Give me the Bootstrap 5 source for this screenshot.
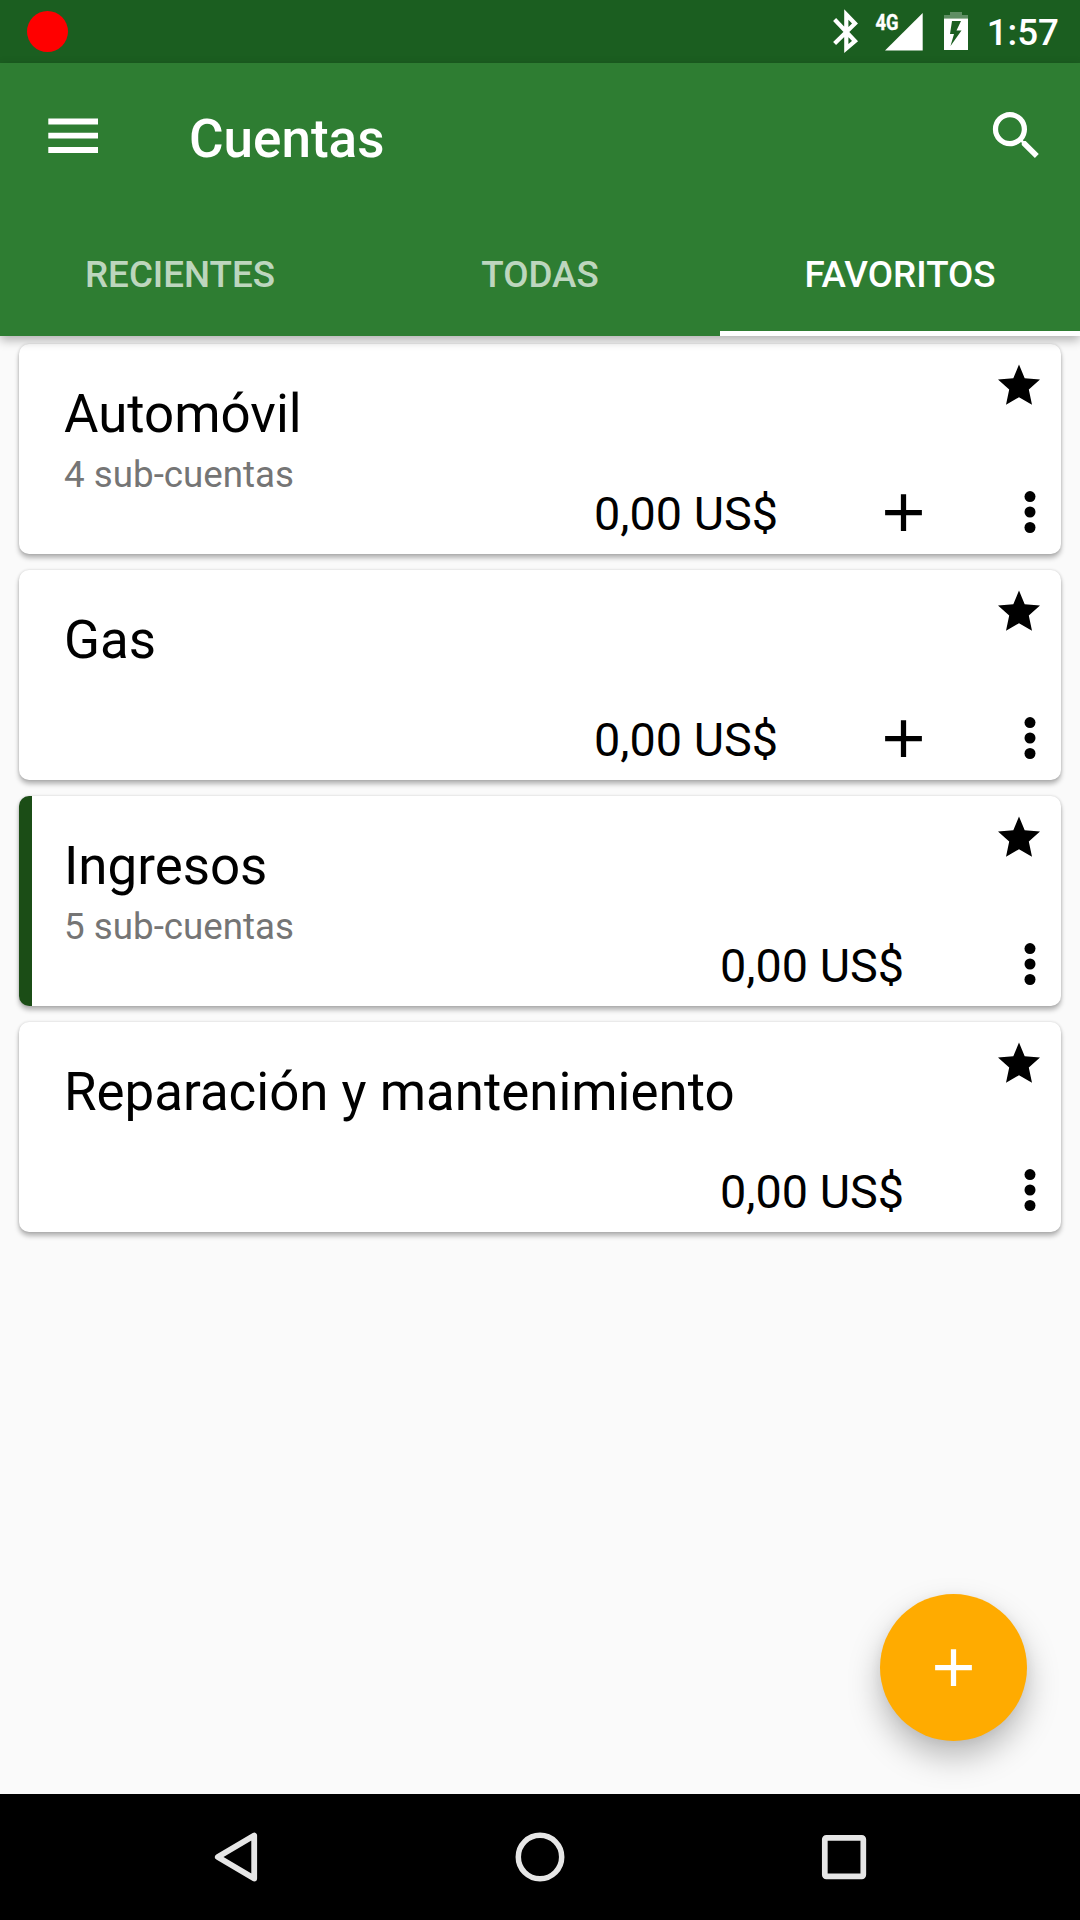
<!DOCTYPE html>
<html lang="es">
<head>
<meta charset="utf-8">
<meta name="viewport" content="width=device-width, initial-scale=1">
<title>Cuentas</title>
<link href="https://cdn.jsdelivr.net/npm/bootstrap@5.3.0/dist/css/bootstrap.min.css" rel="stylesheet">
<style>
  body { font-family: Roboto, "Noto Sans", sans-serif; background: #fafafa; color: #000; }
  svg { display: block; flex: none; }
  .screen { width: 1080px; height: 1920px; }
  .status-bar { height: 63px; background: #1b5e20; padding: 0 21px 0 27px; }
  .rec-dot { width: 41px; height: 41px; background: #f00; }
  .clock { font-size: 36.75px; line-height: 43px; font-weight: 500; padding-top: 2px; margin-left: 16px; }
  .signal-label { font-size: 22px; font-weight: 700; }
  .app-bar { background: #2e7d32; box-shadow: 0 4px 10px rgba(0,0,0,.3); z-index: 2; }
  .tool-row { height: 147px; padding: 0 32px 0 42px; }
  .tool-title { font-size: 53px; line-height: 62px; font-weight: 500; margin-left: 84px; padding-top: 4px; }
  .tab-row { height: 126px; }
  .tab-row .nav-link { height: 126px; font-size: 36.75px; line-height: 43px; font-weight: 500; color: rgba(255,255,255,.7); border-radius: 0; padding: 7px 0 0; border-bottom: 5px solid transparent; }
  .tab-row .nav-link.active { color: #fff; border-bottom-color: #fff; }
  .accounts { padding: 8px 19px; gap: 16px; }
  .account { height: 210px; border: 0; border-radius: 10px; box-shadow: 0 4px 5px rgba(0,0,0,.28), 0 0 3px rgba(0,0,0,.16); padding: 0 0 10px 45px; overflow: hidden; }
  .account.income { border-left: 13px solid #1b4d16; padding-left: 32px; }
  .account-name { font-size: 52.85px; line-height: 62px; padding-top: 39px; }
  .account-note { font-size: 36.75px; line-height: 43px; color: #757575; margin-top: 8px; }
  .star { margin: 20px 20px 0 0; }
  .amount { font-size: 46.75px; line-height: 56px; margin-right: 94px; padding-top: 2px; }
  .action-row { height: 63px; margin-top: -52px; }
  .act { width: 126px; height: 63px; }
  .fab { width: 147px; height: 147px; right: 53px; bottom: 53px; background: #ffab00; box-shadow: 0 16px 32px rgba(0,0,0,.26), 0 2px 12px rgba(0,0,0,.05); }
  .nav-keys { height: 126px; padding: 0 166px; }
</style>
<script src="https://cdn.jsdelivr.net/npm/bootstrap@5.3.0/dist/js/bootstrap.bundle.min.js"></script>
</head>
<body>
<svg class="d-none" aria-hidden="true">
  <symbol id="plus" viewBox="0 0 24 24"><path d="M19 13h-6v6h-2v-6H5v-2h6V5h2v6h6z" fill="currentColor"/></symbol>
  <symbol id="star" viewBox="0 0 44 43"><path d="M22 .500L27.700 14.300 43 15.500 31.800 25.500 35 40.800 22 33.200 9 40.800 12.200 25.500 1 15.500 16.300 14.300z" fill="currentColor"/></symbol>
  <symbol id="dots" viewBox="0 0 63 63"><g fill="currentColor"><circle cx="32" cy="15.600" r="5.500"/><circle cx="32" cy="31" r="5.500"/><circle cx="32" cy="46.500" r="5.500"/></g></symbol>
</svg>
<div class="screen d-flex flex-column overflow-hidden">
  <header class="status-bar d-flex align-items-center text-white">
    <span class="rec-dot rounded-circle"></span>
    <svg class="ms-auto" width="150" height="63" viewBox="820 0 150 63">
      <path d="M833.600 19.500L854 41 845.300 48.500V14.500L854 23.500 833.600 43.500" fill="none" stroke="#fff" stroke-width="4.200"/>
      <text class="signal-label" x="874.500" y="30" fill="#fff" stroke="#fff" stroke-width=".4" textLength="23" lengthAdjust="spacingAndGlyphs">4G</text>
      <path d="M884 50.500L921.700 13V50.500z" fill="#fff"/>
      <path d="M943 18.500v-3.500h6v-3h12v3h6v3.500z" fill="#fff" opacity=".3"/>
      <path fill-rule="evenodd" d="M943 18.500h24V50h-24zM951 21l-2 13h4l-3.500 12 11-15.500h-5l4.500-9.500z" fill="#fff"/>
    </svg>
    <span class="clock">1:57</span>
  </header>

  <div class="app-bar position-relative text-white">
    <div class="tool-row d-flex align-items-center">
      <svg width="63" height="63" viewBox="0 0 63 63"><path d="M6.300 16.500h49.700M6.300 30.700h49.700M6.300 45h49.700" stroke="#fff" stroke-width="5.800"/></svg>
      <h1 class="tool-title mb-0">Cuentas</h1>
      <svg class="ms-auto" width="63" height="63" viewBox="0 .3 24 24"><path fill="#fff" d="M15.500 14h-.79l-.28-.27A6.471 6.471 0 0 0 16 9.500 6.500 6.500 0 1 0 9.500 16c1.610 0 3.090-.59 4.230-1.570l.27.28v.79l5 4.990L20.490 19l-4.990-5zm-6 0C7.010 14 5 11.990 5 9.500S7.010 5 9.500 5 14 7.010 14 9.500 11.990 14 9.500 14z"/></svg>
    </div>
    <nav class="tab-row nav nav-justified">
      <a class="nav-link d-flex align-items-center justify-content-center">RECIENTES</a>
      <a class="nav-link d-flex align-items-center justify-content-center">TODAS</a>
      <a class="nav-link active d-flex align-items-center justify-content-center">FAVORITOS</a>
    </nav>
  </div>

  <main class="position-relative flex-grow-1">
    <div class="accounts d-flex flex-column">
      <article class="card account">
        <div class="d-flex justify-content-between align-items-start flex-grow-1">
          <div><div class="account-name">Automóvil</div><div class="account-note">4 sub-cuentas</div></div>
          <svg class="star" width="44" height="43"><use href="#star"/></svg>
        </div>
        <div class="action-row d-flex align-items-center justify-content-end">
          <span class="amount">0,00 US$</span>
          <span class="act"><svg width="63" height="63"><use href="#plus"/></svg></span>
          <svg width="63" height="63"><use href="#dots"/></svg>
        </div>
      </article>
      <article class="card account">
        <div class="d-flex justify-content-between align-items-start flex-grow-1">
          <div class="account-name">Gas</div>
          <svg class="star" width="44" height="43"><use href="#star"/></svg>
        </div>
        <div class="action-row d-flex align-items-center justify-content-end">
          <span class="amount">0,00 US$</span>
          <span class="act"><svg width="63" height="63"><use href="#plus"/></svg></span>
          <svg width="63" height="63"><use href="#dots"/></svg>
        </div>
      </article>
      <article class="card account income">
        <div class="d-flex justify-content-between align-items-start flex-grow-1">
          <div><div class="account-name">Ingresos</div><div class="account-note">5 sub-cuentas</div></div>
          <svg class="star" width="44" height="43"><use href="#star"/></svg>
        </div>
        <div class="action-row d-flex align-items-center justify-content-end">
          <span class="amount">0,00 US$</span>
          <svg width="63" height="63"><use href="#dots"/></svg>
        </div>
      </article>
      <article class="card account">
        <div class="d-flex justify-content-between align-items-start flex-grow-1">
          <div class="account-name">Reparación y mantenimiento</div>
          <svg class="star" width="44" height="43"><use href="#star"/></svg>
        </div>
        <div class="action-row d-flex align-items-center justify-content-end">
          <span class="amount">0,00 US$</span>
          <svg width="63" height="63"><use href="#dots"/></svg>
        </div>
      </article>
    </div>
    <button class="fab btn rounded-circle position-absolute border-0 p-0 d-flex align-items-center justify-content-center text-white" aria-label="Añadir"><svg width="63" height="63"><use href="#plus"/></svg></button>
  </main>

  <footer class="nav-keys position-relative bg-black d-flex align-items-center justify-content-between">
    <svg width="140" height="126" viewBox="166 1794 140 126"><path d="M254.200 1835.500v43L217.800 1857z" fill="none" stroke="#e6e6e6" stroke-width="5.800" stroke-linejoin="round"/></svg>
    <svg width="140" height="126" viewBox="470 1794 140 126"><circle cx="540" cy="1857" r="21.700" fill="none" stroke="#e6e6e6" stroke-width="5.500"/></svg>
    <svg width="140" height="126" viewBox="774 1794 140 126"><rect x="824.800" y="1837.800" width="38.500" height="38.500" rx="1.500" fill="none" stroke="#e6e6e6" stroke-width="5.700"/></svg>
  </footer>
</div>
</body>
</html>
